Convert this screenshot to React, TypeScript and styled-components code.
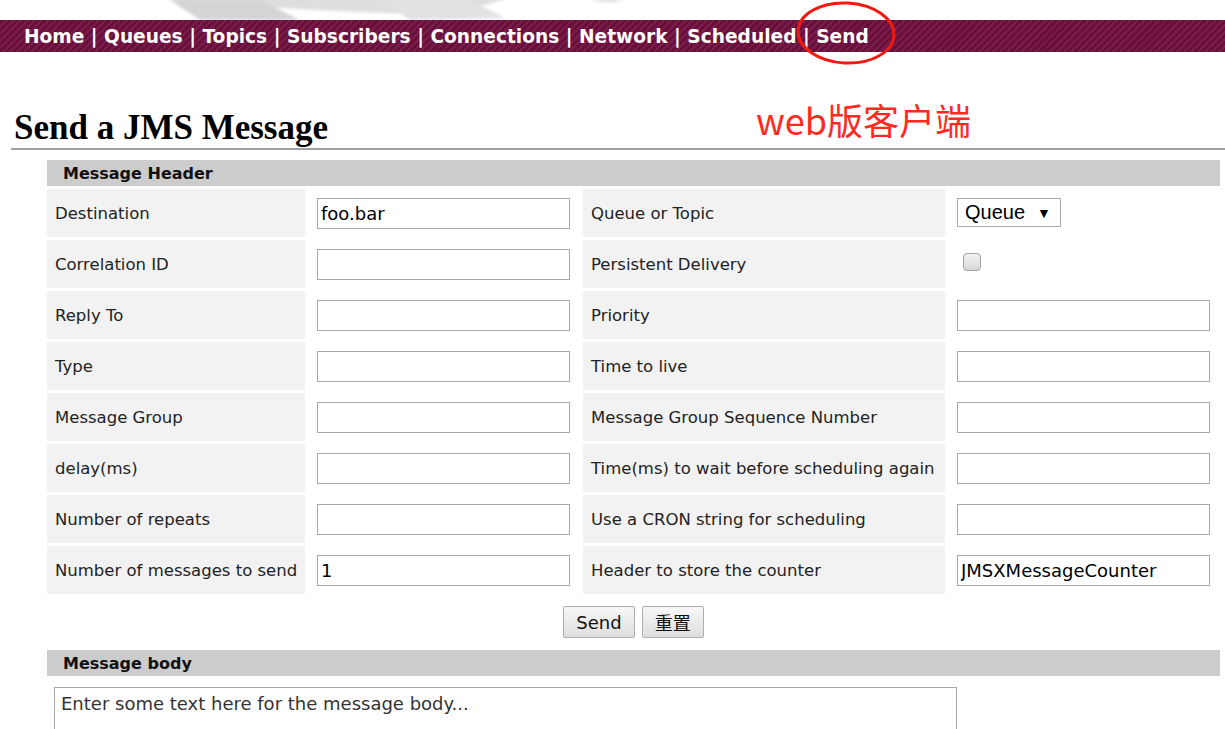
import React from "react";
import styled, { createGlobalStyle } from "styled-components";

const GlobalStyle = createGlobalStyle`
  html, body { margin: 0; padding: 0; background: #ffffff; }
  body { font-family: Verdana, "DejaVu Sans", sans-serif; color: #222; }
  * { box-sizing: border-box; }
`;

const Page = styled.div`
  position: relative;
  width: 1225px;
  min-height: 729px;
  overflow: hidden;
`;

const Banner = styled.div`
  height: 20px;
  overflow: hidden;
`;

const NavBar = styled.nav`
  height: 32px;
  display: flex;
  align-items: center;
  padding-left: 24px;
  background-color: #6b0e3c;
  background-image: repeating-linear-gradient(
    -45deg,
    rgba(255, 255, 255, 0) 0px,
    rgba(255, 255, 255, 0) 3px,
    rgba(255, 255, 255, 0.07) 3px,
    rgba(255, 255, 255, 0.07) 5px
  );
  font-family: Verdana, "DejaVu Sans", sans-serif;
  font-weight: bold;
  font-size: 18.6px;
  color: #ffffff;
  white-space: pre;
`;

const NavLink = styled.a`
  color: #ffffff;
  text-decoration: none;
`;

const Content = styled.div`
  padding-left: 11px;
`;

const Title = styled.h1`
  margin: 0;
  padding: 58px 0 2px 3px;
  font-family: Georgia, "Liberation Serif", serif;
  font-weight: bold;
  font-size: 35px;
  line-height: 36px;
  color: #000;
  border-bottom: 2px solid #a0a0a0;
`;

const Form = styled.div`
  margin: 10px 5px 0 36px;
  display: flex;
  flex-direction: column;
`;

const SectionBar = styled.div`
  height: 26px;
  background: #cccccc;
  display: flex;
  align-items: center;
  padding-left: 16px;
  font-weight: bold;
  font-size: 16px;
  color: #111;
`;

const Grid = styled.div`
  margin-top: 3px;
  display: grid;
  grid-template-columns: 258px 272px 362px 272px;
  grid-auto-rows: 48px;
  gap: 3px;
`;

const LabelCell = styled.div`
  background: #f2f2f2;
  display: flex;
  align-items: center;
  padding-left: 8px;
  font-size: 16.5px;
  color: #222;
  white-space: nowrap;
`;

const FieldCell = styled.div`
  display: flex;
  align-items: center;
  padding-left: 9px;
`;

const TextInput = styled.input`
  width: 253px;
  height: 31px;
  border: 1px solid #a9a9a9;
  padding: 0 3px;
  font-family: Verdana, "DejaVu Sans", sans-serif;
  font-size: 18px;
  color: #000;
  background: #fff;
  outline: none;
`;

const SelectBox = styled.div`
  width: 104px;
  height: 29px;
  margin-top: -1px;
  border: 1px solid #aaaaaa;
  background: #fff;
  display: flex;
  align-items: center;
  padding-left: 7px;
  gap: 12px;
  font-family: Arial, "Liberation Sans", sans-serif;
  font-size: 20px;
  color: #000;
`;

const Caret = styled.span`
  font-size: 14px;
`;

const CheckBox = styled.span`
  display: inline-block;
  width: 18px;
  height: 18px;
  margin-left: 6px;
  margin-top: -4px;
  border: 1px solid #a3a3a3;
  border-radius: 4px;
  background: linear-gradient(#f2f2f2, #d8d8d8);
`;

const ButtonRow = styled.div`
  display: flex;
  justify-content: center;
  gap: 7px;
  margin: 12px 0 12px;
`;

const Button = styled.button`
  height: 32px;
  padding: 0 12px;
  border: 1px solid #adadad;
  border-radius: 2px;
  background: linear-gradient(#f8f8f8, #dedede);
  font-family: Verdana, "DejaVu Sans", "Noto Sans CJK SC", sans-serif;
  font-size: 18px;
  color: #111;
`;

const BodyArea = styled.textarea`
  margin: 11px 0 0 7px;
  width: 903px;
  height: 110px;
  border: 1px solid #a9a9a9;
  padding: 5px 6px;
  font-family: Verdana, "DejaVu Sans", sans-serif;
  font-size: 18px;
  color: #333;
  resize: none;
  outline: none;
  &::placeholder { color: #333; }
`;

const Annotation = styled.div`
  position: absolute;
  left: 756px;
  top: 95px;
  font-family: "Noto Sans CJK SC", sans-serif;
  font-size: 36px;
  line-height: 48px;
  color: #ff2a1f;
`;

const Circle = styled.svg`
  position: absolute;
  left: 794px;
  top: 0px;
  pointer-events: none;
`;

const Feather = () => (
  <svg width="1225" height="20" viewBox="0 0 1225 20">
    <defs>
      <filter id="blur" x="-20%" y="-50%" width="140%" height="200%">
        <feGaussianBlur stdDeviation="1.8" />
      </filter>
    </defs>
    <g filter="url(#blur)" fill="#dedede">
      <path d="M140 -4 C220 4 300 10 360 12 L420 14 C460 10 490 6 512 -4 Z" />
      <path d="M170 0 L200 20 L300 20 L260 0 Z" fill="#d4d4d4" />
      <path d="M380 0 L410 20 L505 18 L470 0 Z" fill="#e2e2e2" />
      <path d="M585 -4 C600 4 615 6 628 -4 Z" fill="#e4e4e4" />
    </g>
  </svg>
);

const rows: [string, React.ReactNode, string, React.ReactNode][] = [
  ["Destination", <TextInput defaultValue="foo.bar" />, "Queue or Topic", <SelectBox>Queue<Caret>▼</Caret></SelectBox>],
  ["Correlation ID", <TextInput />, "Persistent Delivery", <CheckBox />],
  ["Reply To", <TextInput />, "Priority", <TextInput />],
  ["Type", <TextInput />, "Time to live", <TextInput />],
  ["Message Group", <TextInput />, "Message Group Sequence Number", <TextInput />],
  ["delay(ms)", <TextInput />, "Time(ms) to wait before scheduling again", <TextInput />],
  ["Number of repeats", <TextInput />, "Use a CRON string for scheduling", <TextInput />],
  ["Number of messages to send", <TextInput defaultValue="1" />, "Header to store the counter", <TextInput defaultValue="JMSXMessageCounter" />],
];

const navItems = ["Home", "Queues", "Topics", "Subscribers", "Connections", "Network", "Scheduled", "Send"];

export default function App() {
  return (
    <Page>
      <GlobalStyle />
      <Banner>
        <Feather />
      </Banner>
      <NavBar>
        {navItems.map((n, i) => (
          <React.Fragment key={n}>
            {i > 0 && " | "}
            <NavLink href="#">{n}</NavLink>
          </React.Fragment>
        ))}
      </NavBar>
      <Content>
        <Title>Send a JMS Message</Title>
        <Form>
          <SectionBar>Message Header</SectionBar>
          <Grid>
            {rows.map(([l1, f1, l2, f2]) => (
              <React.Fragment key={l1}>
                <LabelCell>{l1}</LabelCell>
                <FieldCell>{f1}</FieldCell>
                <LabelCell>{l2}</LabelCell>
                <FieldCell>{f2}</FieldCell>
              </React.Fragment>
            ))}
          </Grid>
          <ButtonRow>
            <Button>Send</Button>
            <Button>重置</Button>
          </ButtonRow>
          <SectionBar>Message body</SectionBar>
          <BodyArea placeholder="Enter some text here for the message body..." />
        </Form>
      </Content>
      <Annotation>web版客户端</Annotation>
      <Circle width="104" height="70" viewBox="0 0 104 70">
        <ellipse cx="52" cy="33" rx="48" ry="30" fill="none" stroke="#f01a10" strokeWidth="3" transform="rotate(3 52 33)" />
      </Circle>
    </Page>
  );
}
